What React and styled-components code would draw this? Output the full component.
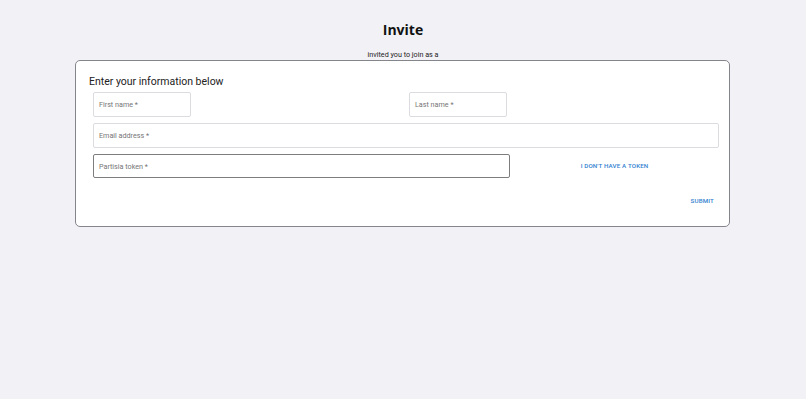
import React from "react";
import styled, { createGlobalStyle } from "styled-components";

const Global = createGlobalStyle`
  html, body { margin: 0; padding: 0; background: #f2f1f6; }
  body { font-family: Roboto, "Liberation Sans", sans-serif; }
`;

const Page = styled.div`
  width: 806px;
  height: 399px;
  box-sizing: border-box;
  padding-top: 20px;
  display: flex;
  flex-direction: column;
  align-items: center;
`;

const Title = styled.h1`
  margin: 0;
  font-family: "Open Sans", sans-serif;
  font-weight: 700;
  font-size: 14px;
  line-height: 20px;
  color: #111;
`;

const Subtitle = styled.div`
  margin-top: 10px;
  font-family: Roboto, sans-serif;
  font-size: 7.2px;
  line-height: 9px;
  color: #222;
`;

const Card = styled.div`
  margin-top: 1px;
  align-self: flex-start;
  margin-left: 75px;
  width: 655px;
  height: 167px;
  box-sizing: border-box;
  background: #fff;
  border: 1px solid #85858c;
  border-radius: 5px;
  padding: 14px 10px 0 13px;
  display: flex;
  flex-direction: column;
`;

const Heading = styled.h2`
  margin: 0;
  font-weight: 400;
  font-size: 10.5px;
  line-height: 14px;
  color: #222;
`;

const Grid = styled.div`
  margin-top: 3px;
  padding-left: 4px;
  display: grid;
  grid-template-columns: 316px 1fr;
  row-gap: 6px;
`;

const TokenRow = styled.div`
  grid-column: 1 / -1;
  display: grid;
  grid-template-columns: 417px 1fr;
  align-items: center;
`;

const Field = styled.div`
  box-sizing: border-box;
  height: ${(p) => (p.$tall ? 25 : 24)}px;
  width: ${(p) => p.$width || "100%"};
  border: 1px solid ${(p) => (p.$focus ? "#7d7d7d" : "#dcdce0")};
  border-radius: 2px;
  display: flex;
  align-items: center;
  padding-left: 5px;
  font-size: 7.2px;
  color: #757575;
  grid-column: ${(p) => (p.$full ? "1 / -1" : "auto")};
`;

const TextButton = styled.button`
  background: none;
  border: none;
  padding: 0;
  font-family: Roboto, sans-serif;
  font-weight: 500;
  font-size: 6.2px;
  letter-spacing: 0.15px;
  text-transform: uppercase;
  color: #2f7fd0;
  cursor: pointer;
  justify-self: center;
`;

const Footer = styled.div`
  margin-top: 19px;
  display: flex;
  justify-content: flex-end;
  padding-right: 5px;
`;

export default function App() {
  return (
    <>
      <Global />
      <Page>
        <Title>Invite</Title>
        <Subtitle>invited you to join as a</Subtitle>
        <Card>
          <Heading>Enter your information below</Heading>
          <Grid>
            <Field $width="98px" $tall>First name *</Field>
            <Field $width="98px" $tall>Last name *</Field>
            <Field $full $tall>Email address *</Field>
            <TokenRow>
              <Field $focus>Partisia token *</Field>
              <TextButton>I don't have a token</TextButton>
            </TokenRow>
          </Grid>
          <Footer>
            <TextButton>Submit</TextButton>
          </Footer>
        </Card>
      </Page>
    </>
  );
}
